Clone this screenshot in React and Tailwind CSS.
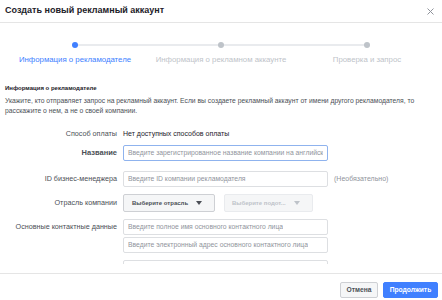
import React from "react";

const font = { fontFamily: '"Liberation Sans", Arial, sans-serif' };

const Field = ({ placeholder, focused }) => (
  <div
    className={`w-[205px] h-[16px] border rounded-[2px] px-[4px] flex items-center text-[6.8px] text-[#90949c] bg-white ${
      focused ? "border-[#8fb3ee]" : "border-[#dddfe2]"
    }`}
  >
    <span className="whitespace-nowrap overflow-hidden">{placeholder}</span>
  </div>
);

const Step = ({ label, active }) => (
  <div className="flex flex-col items-center w-[146px]">
    <div
      className={`w-[6px] h-[6px] rounded-full ${
        active ? "bg-[#4080ff]" : "bg-[#bec3c9]"
      }`}
    />
    <div
      className={`mt-[6px] text-[7.8px] whitespace-nowrap ${
        active ? "text-[#4080ff]" : "text-[#bec3c9]"
      }`}
    >
      {label}
    </div>
  </div>
);

const Caret = ({ color }) => (
  <svg width="6" height="4" viewBox="0 0 6 4">
    <path d="M0 0h6L3 4z" fill={color} />
  </svg>
);

export default function App() {
  return (
    <div className="w-[442px] h-[300px] bg-white flex flex-col overflow-hidden" style={font}>
      {/* Header */}
      <div className="h-[23px] shrink-0 border-b border-[#e5e5e5] flex items-center justify-between pl-[5px] pr-[8px]">
        <span className="text-[9px] font-bold text-[#1d2129]">
          Создать новый рекламный аккаунт
        </span>
        <svg width="7" height="7" viewBox="0 0 7 7">
          <path d="M0.5 0.5l6 6M6.5 0.5l-6 6" stroke="#90949c" strokeWidth="1" />
        </svg>
      </div>

      {/* Stepper */}
      <div className="relative h-[47px] shrink-0 pt-[19px] flex justify-center">
        <div className="absolute top-[21px] left-[76px] w-[291px] h-[2px] bg-[#e9ebee]" />
        <div className="relative flex">
          <Step label="Информация о рекламодателе" active />
          <Step label="Информация о рекламном аккаунте" />
          <Step label="Проверка и запрос" />
        </div>
      </div>

      {/* Body (scroll area) */}
      <div className="flex-1">
        <div className="h-[194px] px-[5px] pt-[14px] overflow-hidden">
          <div className="text-[6px] leading-[8px] font-bold text-[#1d2129]">
            Информация о рекламодателе
          </div>
          <div className="mt-[4px] text-[6.75px] leading-[10px] text-[#4b4f56]">
            Укажите, кто отправляет запрос на рекламный аккаунт. Если вы создаете рекламный аккаунт от имени другого рекламодателя, то расскажите о нем, а не о своей компании.
          </div>

          <div className="mt-[10px] flex flex-col text-[7.2px] text-[#4b4f56]">
            <div className="flex items-center h-[16px]">
              <div className="w-[118px] shrink-0 text-right pr-[6px]">Способ оплаты</div>
              <div className="text-[7px] text-[#1d2129]">Нет доступных способов оплаты</div>
            </div>
            <div className="flex items-center h-[22px]">
              <div className="w-[118px] shrink-0 text-right pr-[6px] text-[7.5px] font-bold">Название</div>
              <Field placeholder="Введите зарегистрированное название компании на английском языке" focused />
            </div>
            <div className="flex items-center h-[30px]">
              <div className="w-[118px] shrink-0 text-right pr-[6px]">ID бизнес-менеджера</div>
              <Field placeholder="Введите ID компании рекламодателя" />
              <div className="ml-[6px] text-[7px] text-[#90949c]">(Необязательно)</div>
            </div>
            <div className="flex items-center h-[18px]">
              <div className="w-[118px] shrink-0 text-right pr-[6px]">Отрасль компании</div>
              <div className="w-[92px] h-[18px] border border-[#ced0d4] bg-[#f5f6f7] rounded-[2px] flex items-center gap-[8px] pl-[8px] text-[6px] font-bold text-[#4b4f56] whitespace-nowrap">
                <span>Выберите отрасль</span>
                <Caret color="#4b4f56" />
              </div>
              <div className="ml-[9px] w-[89px] h-[18px] border border-[#e9ebee] bg-[#f5f6f7] rounded-[2px] flex items-center gap-[8px] pl-[7px] text-[6px] font-bold text-[#bec3c9] whitespace-nowrap">
                <span>Выберите подот...</span>
                <Caret color="#bec3c9" />
              </div>
            </div>
            <div className="flex mt-[7px]">
              <div className="w-[118px] shrink-0 text-right pr-[6px] h-[16px] flex items-center justify-end">Основные контактные данные</div>
              <div className="flex flex-col">
                <Field placeholder="Введите полное имя основного контактного лица" />
                <div className="mt-[2px]">
                  <Field placeholder="Введите электронный адрес основного контактного лица" />
                </div>
                <div className="mt-[7px]">
                  <Field placeholder="" />
                </div>
              </div>
            </div>
          </div>
        </div>
      </div>

      {/* Footer */}
      <div className="h-[27px] shrink-0 border-t border-[#e5e5e5] flex items-start justify-end gap-[5px] pt-[8px] pr-[4px] bg-white">
        <div className="h-[16px] w-[38px] border border-[#ced0d4] bg-[#f5f6f7] rounded-[2px] flex items-center justify-center text-[6.7px] font-bold text-[#4b4f56]">
          Отмена
        </div>
        <div className="h-[16px] w-[55px] border border-[#4080ff] bg-[#4080ff] rounded-[2px] flex items-center justify-center text-[6.7px] font-bold text-white">
          Продолжить
        </div>
      </div>
    </div>
  );
}
